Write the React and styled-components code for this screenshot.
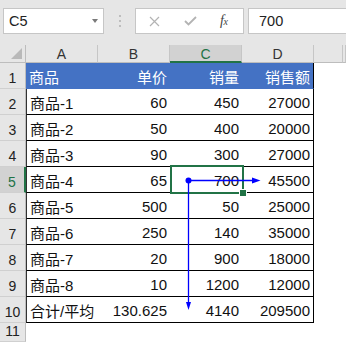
import React from 'react';
import styled, { createGlobalStyle } from 'styled-components';

const Global = createGlobalStyle`
  html, body { margin: 0; padding: 0; background: #fff; }
  body {
    width: 346px; height: 342px; overflow: hidden;
    font-family: "Liberation Sans", "Noto Sans CJK SC", sans-serif;
  }
`;

const Page = styled.div`
  position: relative;
  width: 346px;
  height: 342px;
  display: flex;
  flex-direction: column;
  background: #fff;
`;

const TopBar = styled.div`
  height: 45px;
  flex: none;
  background: #e6e6e6;
  display: flex;
  align-items: flex-start;
  padding: 8px 0 0 3px;
  box-sizing: border-box;
`;

const Box = styled.div`
  box-sizing: border-box;
  height: 26px;
  background: #fff;
  border: 1px solid #c6c6c6;
  display: flex;
  align-items: center;
  font-size: 14.5px;
  color: #222;
`;

const NameBox = styled(Box)`
  width: 101px;
  padding: 0 5px 0 5px;
  justify-content: space-between;
`;

const Caret = styled.span`
  width: 0; height: 0;
  border-left: 3.5px solid transparent;
  border-right: 3.5px solid transparent;
  border-top: 4px solid #7a7a7a;
`;

const Grip = styled.div`
  width: 31px;
  height: 26px;
  display: flex;
  flex-direction: column;
  align-items: center;
  justify-content: center;
  gap: 3px;
  & > i { width: 2px; height: 2px; background: #bdbdbd; display: block; }
`;

const FuncBox = styled(Box)`
  width: 109px;
  padding: 0 0 0 13px;
  gap: 0;
`;

const IconSlot = styled.span`
  width: ${p => p.$w}px;
  display: flex;
  align-items: center;
  justify-content: flex-start;
`;

const Fx = styled.span`
  font-family: "Liberation Serif", "DejaVu Serif", serif;
  font-style: italic;
  font-size: 14px;
  color: #444;
  letter-spacing: -0.5px;
  & > small { font-size: 10px; }
`;

const FormulaBox = styled(Box)`
  flex: 1;
  margin-left: 4px;
  border-right: none;
  padding-left: 10px;
`;

const Sheet = styled.div`
  flex: 1;
  display: grid;
  grid-template-columns: 26px 72px 72px 72px 72px 29px 1fr;
  grid-template-rows: 18px repeat(10, 26px) 1fr;
  font-size: 15px;
`;

const Corner = styled.div`
  background: #e6e6e6;
  border-right: 1px solid #bdbdbd;
  border-bottom: 1px solid #bdbdbd;
  box-sizing: border-box;
  position: relative;
  &::after {
    content: "";
    position: absolute;
    right: 3px; bottom: 3px;
    width: 0; height: 0;
    border-left: 11px solid transparent;
    border-bottom: 11px solid #b9b9b9;
  }
`;

const ColHead = styled.div`
  box-sizing: border-box;
  background: ${p => (p.$sel ? '#d2d2d2' : '#e6e6e6')};
  border-right: 1px solid #c6c6c6;
  border-bottom: ${p => (p.$sel ? '2px solid #217346' : '1px solid #bdbdbd')};
  display: flex;
  align-items: center;
  justify-content: center;
  font-size: 14px;
  color: ${p => (p.$sel ? '#217346' : '#333')};
  padding-top: ${p => (p.$sel ? '1px' : '0')};
`;

const RowHead = styled.div`
  box-sizing: border-box;
  background: ${p => (p.$sel ? '#d2d2d2' : '#e6e6e6')};
  border-right: ${p => (p.$sel ? '2px solid #217346' : '1px solid #bdbdbd')};
  border-bottom: 1px solid #d0d0d0;
  display: flex;
  align-items: flex-end;
  justify-content: center;
  padding-bottom: 2px;
  font-size: 14px;
  color: ${p => (p.$sel ? '#217346' : '#222')};
`;

const Cell = styled.div`
  box-sizing: border-box;
  display: flex;
  align-items: center;
  justify-content: ${p => (p.$right ? 'flex-end' : 'flex-start')};
  padding: 1px 3px 0 3px;
  white-space: nowrap;
  background: ${p => (p.$head ? '#4472c4' : '#fff')};
  color: ${p => (p.$head ? '#fff' : '#111')};
  border-bottom: 1px solid ${p => (p.$head ? '#4472c4' : '#000')};
  border-right: ${p => (p.$last ? '1px solid #000' : 'none')};
  border-left: ${p => (p.$first && !p.$head ? '1px solid #333' : 'none')};
`;

const Blank = styled.div`
  background: ${p => (p.$gray ? '#e6e6e6' : '#fff')};
  border-right: ${p => (p.$gray ? '1px solid #c6c6c6' : 'none')};
  border-bottom: ${p => (p.$gray ? '1px solid #bdbdbd' : 'none')};
  box-sizing: border-box;
`;

const Selection = styled.div`
  position: absolute;
  left: 170px;
  top: 165px;
  width: 74px;
  height: 29px;
  box-sizing: border-box;
  border: 2px solid #217346;
  pointer-events: none;
`;

const Handle = styled.div`
  position: absolute;
  left: 239px;
  top: 190px;
  width: 6px;
  height: 6px;
  background: #217346;
  border: 1px solid #fff;
  box-sizing: content-box;
  margin: -1px 0 0 0;
`;

const Overlay = styled.svg`
  position: absolute;
  left: 0;
  top: 0;
  pointer-events: none;
`;

const header = ['商品', '单价', '销量', '销售额'];
const rows = [
  ['商品-1', '60', '450', '27000'],
  ['商品-2', '50', '400', '20000'],
  ['商品-3', '90', '300', '27000'],
  ['商品-4', '65', '700', '45500'],
  ['商品-5', '500', '50', '25000'],
  ['商品-6', '250', '140', '35000'],
  ['商品-7', '20', '900', '18000'],
  ['商品-8', '10', '1200', '12000'],
  ['合计/平均', '130.625', '4140', '209500'],
];
const cols = ['A', 'B', 'C', 'D'];

export default function App() {
  const all = [header, ...rows];
  return (
    <Page>
      <Global />
      <TopBar>
        <NameBox>
          <span>C5</span>
          <Caret />
        </NameBox>
        <Grip><i /><i /><i /></Grip>
        <FuncBox>
          <IconSlot $w={35}>
            <svg width="11" height="11" viewBox="0 0 11 11">
              <path d="M1 1 L10 10 M10 1 L1 10" stroke="#b3b3b3" strokeWidth="1.2" fill="none" />
            </svg>
          </IconSlot>
          <IconSlot $w={36}>
            <svg width="13" height="10" viewBox="0 0 13 10">
              <path d="M1 5 L4.5 8.5 L12 1" stroke="#b3b3b3" strokeWidth="1.8" fill="none" />
            </svg>
          </IconSlot>
          <IconSlot $w={20}>
            <Fx>f<small>x</small></Fx>
          </IconSlot>
        </FuncBox>
        <FormulaBox>700</FormulaBox>
      </TopBar>
      <Sheet>
        <Corner />
        {cols.map(c => (
          <ColHead key={c} $sel={c === 'C'}>{c}</ColHead>
        ))}
        <Blank $gray />
        <Blank $gray />
        {all.map((r, i) => (
          <React.Fragment key={i}>
            <RowHead $sel={i === 4}>{i + 1}</RowHead>
            {r.map((v, j) => (
              <Cell
                key={j}
                $head={i === 0}
                $right={j > 0}
                $first={j === 0}
                $last={j === 3}
              >
                {v}
              </Cell>
            ))}
            <Blank />
            <Blank />
          </React.Fragment>
        ))}
        <RowHead>11</RowHead>
        <Blank /><Blank /><Blank /><Blank /><Blank /><Blank />
      </Sheet>
      <Selection />
      <Handle />
      <Overlay width="346" height="342" viewBox="0 0 346 342">
        <circle cx="188.5" cy="180.5" r="3" fill="#0000ff" />
        <line x1="188.5" y1="180.5" x2="253" y2="180.5" stroke="#0000ff" strokeWidth="1.3" />
        <polygon points="252,177.5 260.5,180.5 252,183.5" fill="#0000ff" />
        <line x1="188.5" y1="180.5" x2="188.5" y2="303" stroke="#0000ff" strokeWidth="1.3" />
        <polygon points="186,302 188.5,310 191,302" fill="#0000ff" />
      </Overlay>
    </Page>
  );
}
